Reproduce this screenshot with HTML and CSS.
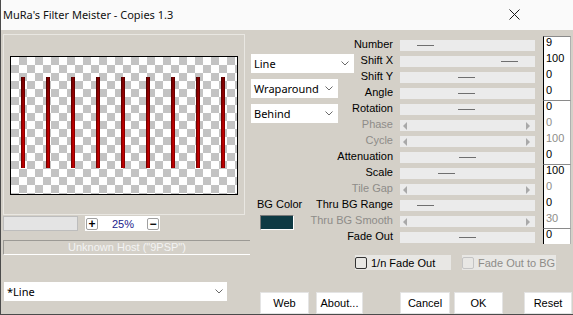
FILE: index.html
```html
<!DOCTYPE html>
<html lang="en">

<head>
    <meta charset="UTF-8">
    <meta name="viewport" content="width=device-width, initial-scale=1.0">
    <title>MuRa's Filter Meister - Copies 1.3</title>

    <link rel="stylesheet" href="styles.css">
</head>

<body>
    <div class="window">
        <div class="titlebar">
            <span class="title">MuRa's Filter Meister - Copies 1.3</span>
            <svg class="close" width="11" height="11" viewBox="0 0 11 11">
                <path d="M0.5 0.5L10.5 10.5M10.5 0.5L0.5 10.5" stroke="#1a1a1a" stroke-width="1" fill="none" />
            </svg>
        </div>

        <div class="client">
            <!-- preview side -->
            <div class="left">
                <div class="preview-group">
                    <div class="canvas">
                        <span class="bar"></span>
                        <span class="bar"></span>
                        <span class="bar"></span>
                        <span class="bar"></span>
                        <span class="bar"></span>
                        <span class="bar"></span>
                        <span class="bar"></span>
                        <span class="bar"></span>
                        <span class="bar"></span>
                    </div>
                </div>

                <div class="zoom-row">
                    <div class="progress"></div>
                    <div class="zoom-ctl">
                        <span class="zbtn">+</span>
                        <span class="zval">25%</span>
                        <span class="zbtn">&minus;</span>
                    </div>
                </div>

                <div class="status">Unknown Host ("9PSP")</div>

                <div class="combo preset">
                    <span>*Line</span>
                    <svg class="chev" width="8" height="5" viewBox="0 0 8 5"><polyline points="0.5,0.5 4,4 7.5,0.5" /></svg>
                </div>
            </div>

            <!-- controls side -->
            <div class="right">
                <div class="controls">
                    <div class="mid">
                        <div class="combo line">
                            <span>Line</span>
                            <svg class="chev" width="8" height="5" viewBox="0 0 8 5"><polyline points="0.5,0.5 4,4 7.5,0.5" /></svg>
                        </div>
                        <div class="combo">
                            <span>Wraparound</span>
                            <svg class="chev" width="8" height="5" viewBox="0 0 8 5"><polyline points="0.5,0.5 4,4 7.5,0.5" /></svg>
                        </div>
                        <div class="combo">
                            <span>Behind</span>
                            <svg class="chev" width="8" height="5" viewBox="0 0 8 5"><polyline points="0.5,0.5 4,4 7.5,0.5" /></svg>
                        </div>
                        <div class="bgcolor">
                            <span>BG Color</span>
                            <div class="swatch"></div>
                        </div>
                    </div>

                    <div class="params">
                        <span class="label">Number</span>
                        <div class="slider"><i style="margin-left:17px"></i></div>
                        <div class="value top">9</div>

                        <span class="label">Shift X</span>
                        <div class="slider"><i style="margin-left:101px"></i></div>
                        <div class="value">100</div>

                        <span class="label">Shift Y</span>
                        <div class="slider"><i style="margin-left:58px"></i></div>
                        <div class="value">0</div>

                        <span class="label">Angle</span>
                        <div class="slider"><i style="margin-left:58px"></i></div>
                        <div class="value">0</div>

                        <span class="label">Rotation</span>
                        <div class="slider"><i style="margin-left:58px"></i></div>
                        <div class="value top">0</div>

                        <span class="label off">Phase</span>
                        <div class="slider off"><b class="arrow-l"></b><b class="arrow-r"></b></div>
                        <div class="value off">0</div>

                        <span class="label off">Cycle</span>
                        <div class="slider off"><b class="arrow-l"></b><b class="arrow-r"></b></div>
                        <div class="value off">100</div>

                        <span class="label">Attenuation</span>
                        <div class="slider"><i style="margin-left:59px"></i></div>
                        <div class="value">0</div>

                        <span class="label">Scale</span>
                        <div class="slider"><i style="margin-left:38px"></i></div>
                        <div class="value top">100</div>

                        <span class="label off">Tile Gap</span>
                        <div class="slider off"><b class="arrow-l"></b><b class="arrow-r"></b></div>
                        <div class="value off">0</div>

                        <span class="label">Thru BG Range</span>
                        <div class="slider"><i style="margin-left:17px"></i></div>
                        <div class="value">0</div>

                        <span class="label off">Thru BG Smooth</span>
                        <div class="slider off"><b class="arrow-l"></b><b class="arrow-r"></b></div>
                        <div class="value off">30</div>

                        <span class="label">Fade Out</span>
                        <div class="slider"><i style="margin-left:59px"></i></div>
                        <div class="value top">0</div>
                    </div>
                </div>

                <div class="checks">
                    <label class="check"><span class="box"></span>1/n Fade Out</label>
                    <label class="check off"><span class="box"></span>Fade Out to BG</label>
                </div>

                <div class="buttons">
                    <button class="btn-web">Web</button>
                    <button class="btn-about">About...</button>
                    <button class="btn-cancel">Cancel</button>
                    <button class="btn-ok">OK</button>
                    <button class="btn-reset">Reset</button>
                </div>
            </div>
        </div>
    </div>
</body>

</html>
```

FILE: styles.css
```css
body {
    margin: 0;
    overflow: hidden;
    font-family: 'Liberation Sans', Arial, sans-serif;
    font-size: 11px;
    color: #000;
}

.window {
    width: 573px;
    height: 315px;
    box-sizing: border-box;
    border-left: 1px solid #4b4b4b;
    border-bottom: 1px solid #4b4b4b;
    display: flex;
    flex-direction: column;
}

.titlebar {
    height: 30px;
    flex: none;
    background-color: #fafafa;
    display: flex;
    align-items: center;
    justify-content: space-between;
    padding-left: 2px;
}

.title {
    font-family: 'Noto Sans', 'Open Sans', sans-serif;
    font-size: 11px;
    color: #111;
    margin-top: -1px;
}

.close {
    margin-right: 53px;
    margin-top: -2px;
}

.client {
    flex: 1;
    display: flex;
    background-color: #d4d0c8;
}

/* left column */

.left {
    width: 250px;
    flex: none;
    box-sizing: border-box;
    padding-left: 2px;
    display: flex;
    flex-direction: column;
    align-items: flex-start;
}

.preview-group {
    margin-top: 4px;
    width: 242px;
    height: 181px;
    box-sizing: border-box;
    border: 1px solid #e9e7e2;
    padding: 21px 0 0 6px;
}

.canvas {
    width: 228px;
    height: 139px;
    box-sizing: border-box;
    border: 1px solid #000;
    background-color: #fff;
    background-image: conic-gradient(#c3c3c3 25%, #fff 0 50%, #c3c3c3 0 75%, #fff 0);
    background-size: 16px 16px;
    display: flex;
    gap: 21px;
    padding: 20px 0 0 10px;
}

.bar {
    width: 4px;
    height: 91px;
    background:
        linear-gradient(to bottom, rgba(0, 0, 0, 0.35), rgba(0, 0, 0, 0) 55%),
        linear-gradient(to right, #5a0000, #d40000 55%, #6e0000);
}

.zoom-row {
    margin-top: 1px;
    display: flex;
}

.progress {
    width: 75px;
    height: 15px;
    box-sizing: border-box;
    background-color: #e4e4e4;
    border: 1px solid #bdbdbd;
}

.zoom-ctl {
    margin-left: 7px;
    width: 75px;
    height: 15px;
    background-color: #fff;
    display: flex;
    align-items: center;
}

.zbtn {
    width: 12px;
    height: 12px;
    box-sizing: border-box;
    border: 1px solid #a0a0a0;
    border-radius: 2px;
    display: flex;
    align-items: center;
    justify-content: center;
    font-weight: bold;
    font-size: 12px;
    line-height: 1;
    margin-left: 1px;
}

.zval {
    color: #1a1a8c;
    margin-left: 14px;
    width: 34px;
}

.status {
    margin-top: 9px;
    width: 247px;
    height: 15px;
    box-sizing: border-box;
    border-top: 1px solid #9c9a95;
    border-left: 1px solid #9c9a95;
    border-bottom: 1px solid #fff;
    color: #f3f3f3;
    text-align: center;
    line-height: 13px;
}

.combo {
    background-color: #fff;
    display: flex;
    align-items: center;
    justify-content: space-between;
    box-sizing: border-box;
    padding: 0 5px 0 3px;
    height: 19px;
    width: 87px;
    font-family: 'Noto Sans', 'Open Sans', sans-serif;
    font-size: 11px;
    flex: none;
}

.chev polyline {
    fill: none;
    stroke: #6a6a6a;
    stroke-width: 1;
}

.preset {
    margin-top: 27px;
    margin-left: 1px;
    width: 223px;
    padding-right: 4px;
}

/* right column */

.right {
    flex: 1;
    display: flex;
    flex-direction: column;
}

.controls {
    display: flex;
}

.mid {
    width: 65px;
    flex: none;
    display: flex;
    flex-direction: column;
}

.mid .combo {
    margin-top: 6px;
}

.mid .combo.line {
    margin-top: 24px;
    width: 103px;
}

.bgcolor {
    margin-top: 75px;
    display: flex;
    flex-direction: column;
    align-items: flex-start;
}

.bgcolor span {
    margin-left: 6px;
    line-height: 13px;
}

.swatch {
    margin-top: 4px;
    margin-left: 9px;
    width: 34px;
    height: 15px;
    box-sizing: border-box;
    background-color: #0e3a44;
    border: 1px solid;
    border-color: #7a7a7a #fff #fff #7a7a7a;
}

.params {
    padding-top: 9px;
    display: grid;
    grid-template-columns: 84px 143px 28px;
    grid-auto-rows: 16px;
}

.label {
    justify-self: end;
    padding-right: 7px;
    line-height: 11px;
    white-space: nowrap;
}

.label.off {
    color: #8e8c88;
}

.slider {
    width: 135px;
    height: 11px;
    margin-top: 1px;
    background-color: #ebebeb;
    display: flex;
    align-items: center;
}

.slider i {
    width: 17px;
    height: 1px;
    background-color: #6f6f6f;
}

.slider.off {
    justify-content: space-between;
    padding: 0 5px 0 3px;
    box-sizing: border-box;
}

.arrow-l {
    width: 0;
    height: 0;
    border-top: 4px solid transparent;
    border-bottom: 4px solid transparent;
    border-right: 4px solid #a9a9a9;
}

.arrow-r {
    width: 0;
    height: 0;
    border-top: 4px solid transparent;
    border-bottom: 4px solid transparent;
    border-left: 4px solid #a9a9a9;
}

.value {
    margin-top: -3px;
    height: 16px;
    box-sizing: border-box;
    background-color: #fff;
    border-left: 1px solid #000;
    border-right: 1px solid #b0b0b0;
    padding: 1px 0 0 2px;
    line-height: 11px;
}

.value.top {
    border-top: 1px solid #8a8a8a;
    padding-top: 0;
}

.value.off {
    color: #8e8c88;
}

.checks {
    margin-top: 8px;
    padding-left: 104px;
    display: flex;
    gap: 11px;
}

.check {
    height: 15px;
    width: 96px;
    background-color: #e8e7e4;
    display: flex;
    align-items: center;
}

.check.off {
    width: 94px;
    color: #8e8c88;
}

.box {
    width: 12px;
    height: 12px;
    box-sizing: border-box;
    border: 1px solid #333;
    border-radius: 2px;
    margin-right: 4px;
}

.check.off .box {
    border-color: #c4c4c4;
}

.buttons {
    margin-top: 22px;
    display: flex;
}

button {
    height: 22px;
    padding: 0;
    border: 1px solid #e4e4e4;
    background-color: #fff;
    font-family: 'Liberation Sans', Arial, sans-serif;
    font-size: 11px;
    color: #000;
}

.btn-web {
    width: 49px;
    margin-left: 9px;
}

.btn-about {
    width: 47px;
    margin-left: 7px;
}

.btn-cancel {
    width: 50px;
    margin-left: 37px;
}

.btn-ok {
    width: 49px;
    margin-left: 4px;
}

.btn-reset {
    width: 48px;
    margin-left: 21px;
}
```
